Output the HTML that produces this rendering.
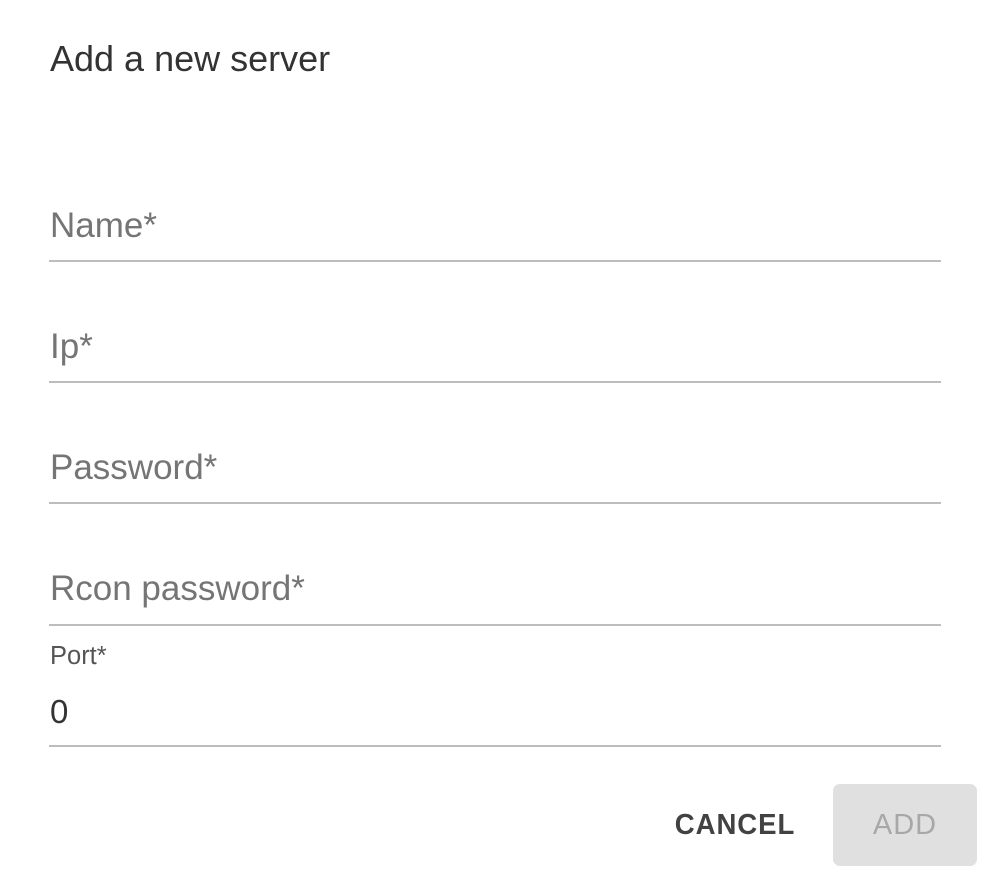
<!DOCTYPE html>
<html><head><style>
body{margin:0;width:987px;height:875px;background:#fff;font-family:"Liberation Sans",sans-serif;position:relative;overflow:hidden}
.t{position:absolute;left:50px;white-space:nowrap;line-height:1}
.l{position:absolute;left:49px;width:892px;height:2px;background:#bdbdbd}
.ph{color:#757575;font-size:35px}
</style></head><body>
<div class="t" style="top:41px;font-size:36px;color:#333">Add a new server</div>
<div class="t ph" style="top:208px">Name*</div><div class="l" style="top:260px"></div>
<div class="t ph" style="top:329px">Ip*</div><div class="l" style="top:381px"></div>
<div class="t ph" style="top:450px">Password*</div><div class="l" style="top:502px"></div>
<div class="t ph" style="top:571px">Rcon password*</div><div class="l" style="top:624px"></div>
<div class="t" style="top:644px;font-size:25.5px;color:#555">Port*</div>
<div class="t" style="top:695px;font-size:33px;color:#333">0</div><div class="l" style="top:745px"></div>
<div style="position:absolute;left:658px;top:784px;width:154px;height:82px;line-height:82px;text-align:center;font-size:29px;color:#424242;letter-spacing:1px;font-weight:bold;transform:scaleX(.95)">CANCEL</div>
<div style="position:absolute;left:833px;top:784px;width:144px;height:82px;background:#e0e0e0;border-radius:7px;line-height:82px;text-align:center;font-size:29px;color:#a8a8a8;letter-spacing:1px">ADD</div>
</body></html>
